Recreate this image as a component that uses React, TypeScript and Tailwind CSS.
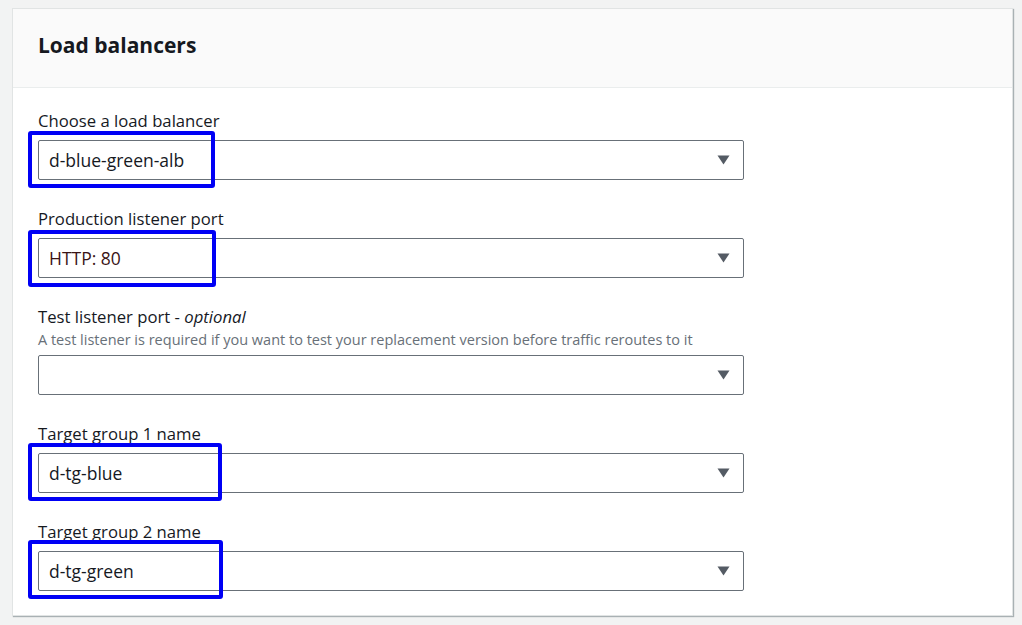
import type { ReactNode } from "react"

/**
 * Blue annotation frame drawn over a select's value
 */
function Highlight({ className }: { className: string }) {
  return (
    <div
      className={`absolute pointer-events-none border-4 border-[#0000f5] rounded-[3px] ${className}`}
    />
  )
}

interface SelectFieldProps {
  label: ReactNode
  description?: string
  value?: string
  highlight?: string
  valueColor?: string
}

function SelectField({ label, description, value, highlight, valueColor = "text-[#16191f]" }: SelectFieldProps) {
  return (
    <div className="flex flex-col">
      <div className="text-[16.7px] leading-[22px] text-[#16191f]">{label}</div>
      {description && (
        <div className="text-[14.5px] leading-[20px] text-[#687078] mt-0.5">{description}</div>
      )}
      <div className={`relative w-[706px] ${description ? "mt-[5px]" : "mt-2"}`}>
        <div className="h-10 flex items-center justify-between border border-[#687078] rounded-[2px] bg-white pl-[10px] pr-[13px]">
          <span className={`text-[17.5px] ${valueColor}`}>{value}</span>
          {/* caret */}
          <svg width="13" height="10" viewBox="0 0 13 10" className="shrink-0">
            <path d="M0.5 0.5 H12.5 L6.5 9.5 Z" fill="#545b64" />
          </svg>
        </div>
        {highlight && <Highlight className={highlight} />}
      </div>
    </div>
  )
}

export default function App() {
  return (
    <div
      className="w-[1022px] h-[625px] bg-[#f2f3f3] pt-2 pl-3 pr-[9px] overflow-hidden"
      style={{ fontFamily: '"Open Sans", "Noto Sans", Arial, sans-serif' }}
    >
      <div className="bg-white border border-[#e1e4e4] shadow-[1px_1px_1px_rgba(0,28,36,0.3)]">
        {/* header */}
        <div className="h-[79px] bg-[#fafafa] border-b border-[#eaeded] flex items-center px-[25px] pb-1">
          <h2 className="text-[21px] font-bold text-[#16191f]">Load balancers</h2>
        </div>

        {/* body */}
        <div className="pt-[22px] pb-6 px-[25px] flex flex-col gap-7">
          <SelectField
            label="Choose a load balancer"
            value="d-blue-green-alb"
            highlight="-left-[10px] -top-[9px] w-[187px] h-[57px]"
          />
          <SelectField
            label="Production listener port"
            value="HTTP: 80"
            valueColor="text-[#3a1416]"
            highlight="-left-[10px] -top-[8px] w-[188px] h-[57px]"
          />
          <SelectField
            label={
              <>
                Test listener port - <i>optional</i>
              </>
            }
            description="A test listener is required if you want to test your replacement version before traffic reroutes to it"
          />
          <SelectField
            label="Target group 1 name"
            value="d-tg-blue"
            highlight="-left-[10px] -top-[10px] w-[194px] h-[58px]"
          />
          <SelectField
            label="Target group 2 name"
            value="d-tg-green"
            highlight="-left-[10px] -top-[11px] w-[195px] h-[59px]"
          />
        </div>
      </div>
    </div>
  )
}
